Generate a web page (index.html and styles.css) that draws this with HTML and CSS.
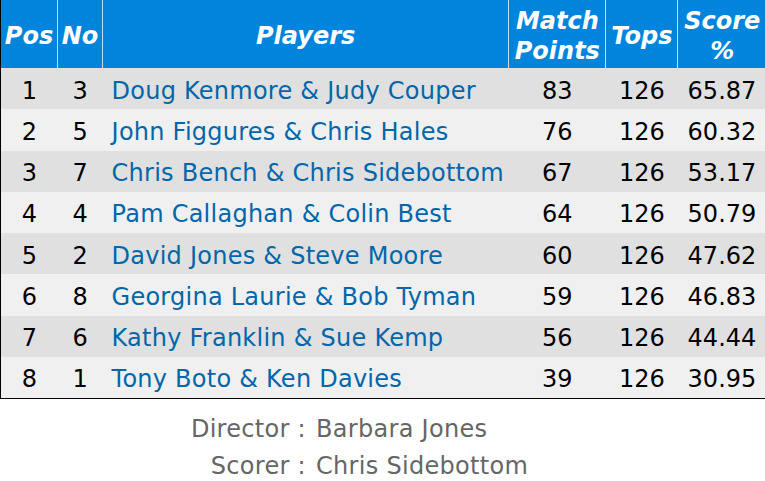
FILE: index.html
```html
<!DOCTYPE html>
<html>
<head>
<meta charset="utf-8">
<link rel="stylesheet" href="styles.css">
</head>
<body>
<table class="results">
  <colgroup>
    <col class="c-pos"><col class="c-no"><col class="c-pl"><col class="c-mp"><col class="c-tops"><col class="c-score">
  </colgroup>
  <thead>
    <tr>
      <th>Pos</th><th>No</th><th>Players</th><th>Match<br>Points</th><th>Tops</th><th>Score<br>%</th>
    </tr>
  </thead>
  <tbody>
    <tr><td>1</td><td>3</td><td class="pl">Doug Kenmore &amp; Judy Couper</td><td>83</td><td>126</td><td>65.87</td></tr>
    <tr><td>2</td><td>5</td><td class="pl">John Figgures &amp; Chris Hales</td><td>76</td><td>126</td><td>60.32</td></tr>
    <tr><td>3</td><td>7</td><td class="pl">Chris Bench &amp; Chris Sidebottom</td><td>67</td><td>126</td><td>53.17</td></tr>
    <tr><td>4</td><td>4</td><td class="pl">Pam Callaghan &amp; Colin Best</td><td>64</td><td>126</td><td>50.79</td></tr>
    <tr><td>5</td><td>2</td><td class="pl">David Jones &amp; Steve Moore</td><td>60</td><td>126</td><td>47.62</td></tr>
    <tr><td>6</td><td>8</td><td class="pl">Georgina Laurie &amp; Bob Tyman</td><td>59</td><td>126</td><td>46.83</td></tr>
    <tr><td>7</td><td>6</td><td class="pl">Kathy Franklin &amp; Sue Kemp</td><td>56</td><td>126</td><td>44.44</td></tr>
    <tr><td>8</td><td>1</td><td class="pl">Tony Boto &amp; Ken Davies</td><td>39</td><td>126</td><td>30.95</td></tr>
  </tbody>
</table>
<div class="credits">
  <div class="label">Director :</div><div class="value">Barbara Jones</div>
  <div class="label">Scorer :</div><div class="value">Chris Sidebottom</div>
</div>
</body>
</html>
```

FILE: styles.css
```css
html, body {
  margin: 0;
  padding: 0;
  background: #ffffff;
}
body {
  font-family: "DejaVu Sans", Verdana, sans-serif;
  font-size: 24px;
}
.results {
  border-collapse: collapse;
  table-layout: fixed;
  width: 766px;
  border-left: 1px solid #000;
  border-bottom: 1px solid #000;
}
.c-pos { width: 57px; }
.c-no { width: 45px; }
.c-pl { width: 406px; }
.c-mp { width: 97px; }
.c-tops { width: 72px; }
.c-score { width: 88px; }
.results th {
  background: #0084dc;
  color: #ffffff;
  font-weight: bold;
  font-style: italic;
  font-size: 24px;
  line-height: 30px;
  height: 68px;
  padding: 4px 0 0;
  text-align: center;
  border-left: 1px solid #c8dcf0;
  box-sizing: border-box;
}
.results th:first-child { border-left: none; }
.results td {
  height: 41.25px;
  padding: 4px 0 0;
  box-sizing: border-box;
  text-align: center;
  color: #000000;
  line-height: 30px;
  white-space: nowrap;
}
.results td.pl {
  text-align: left;
  padding-left: 9px;
  letter-spacing: 0.25px;
  color: #0066aa;
}
.results tbody tr:nth-child(odd) { background: #e0e0e0; }
.results tbody tr:nth-child(even) { background: #f0f0f0; }
.credits {
  display: grid;
  grid-template-columns: 306px auto;
  column-gap: 10px;
  color: #666666;
  font-size: 24px;
  letter-spacing: 0.3px;
  line-height: 37px;
  margin-top: 12px;
}
.label { text-align: right; }
.value { text-align: left; }
```
